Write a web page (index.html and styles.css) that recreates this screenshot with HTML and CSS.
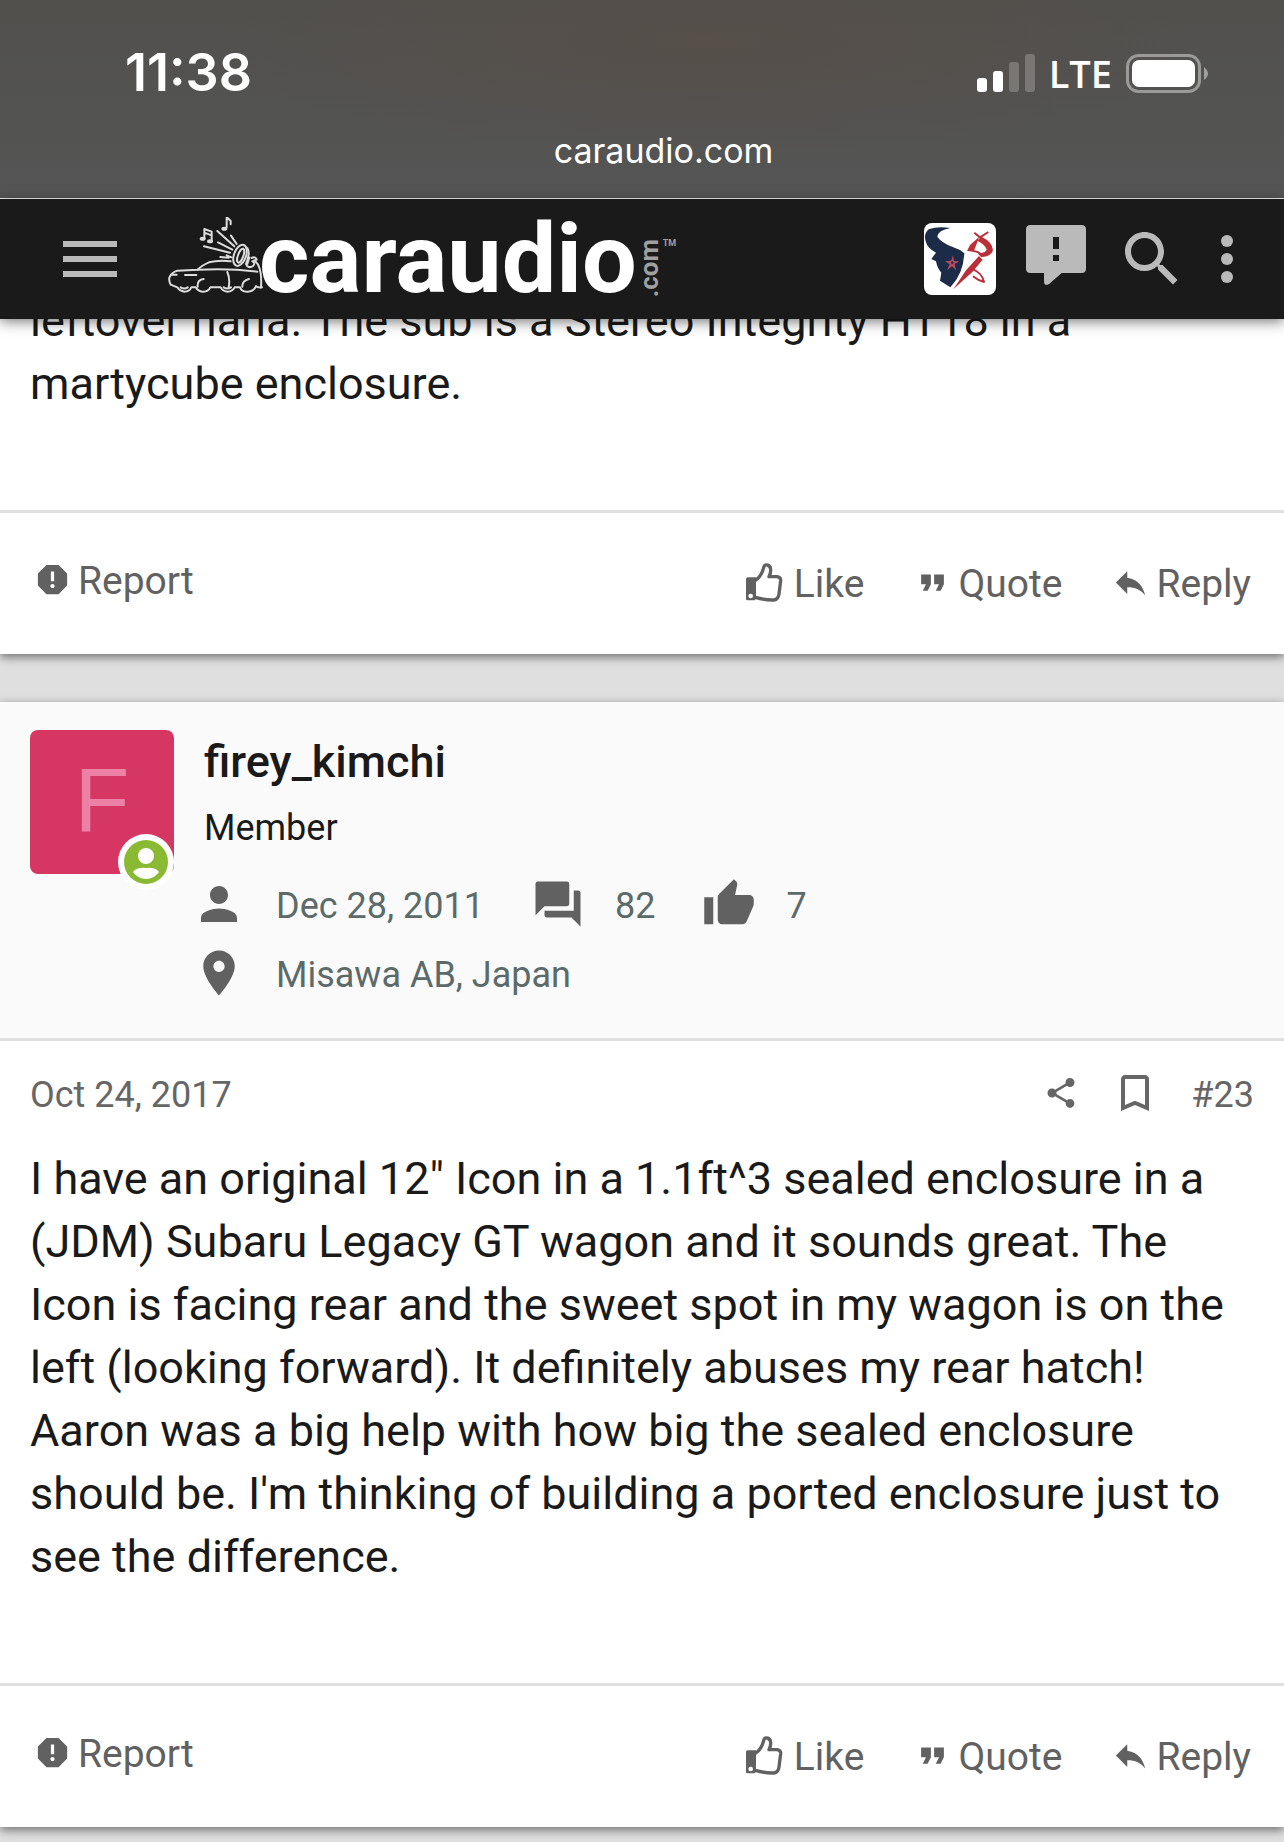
FILE: index.html
```html
<!DOCTYPE html>
<html lang="en">
<head>
<meta charset="utf-8">
<meta name="viewport" content="width=device-width, initial-scale=1">
<title>caraudio.com</title>
<link rel="stylesheet" href="styles.css">
</head>
<body>
<svg class="sprite" aria-hidden="true">
  <symbol id="report" viewBox="0 0 24 24"><path d="M15.73 3H8.27L3 8.27v7.46L8.27 21h7.46L21 15.73V8.27L15.73 3zM12 17.3c-.72 0-1.3-.58-1.3-1.3s.58-1.3 1.3-1.3 1.3.58 1.3 1.3-.58 1.3-1.3 1.3zm1-4.3h-2V7h2v6z"/></symbol>
  <symbol id="like" viewBox="48 39 126 117"><path fill-rule="evenodd" d="M53 82h25v64l-4 5H53q-5 0-5-5V87q0-5 5-5zm9 49a7 7 0 1 0 0 14a7 7 0 1 0 0-14z"/><path fill="none" stroke="currentColor" stroke-width="10" stroke-linejoin="round" d="M76 91C90 83 98 66 102 50Q104 43 112 45Q121 47 122 58Q123 69 117 80L142 80Q153 82 152 92L147 132Q145 148 132 150Q108 151 76 142"/></symbol>
  <symbol id="quote" viewBox="0 0 24 24"><path d="M6 17h3l2-4V7H5v6h3zm8 0h3l2-4V7h-6v6h3z"/></symbol>
  <symbol id="reply" viewBox="0 0 24 24"><path d="M10 9V5l-7 7 7 7v-4.1c5 0 8.500 1.600 11 5.100-1-5-4-10-11-11z"/></symbol>
</svg>

<div class="status">
  <div class="status-row">
    <span class="time">11:38</span>
    <span class="signals">
      <svg width="58" height="38" viewBox="0 0 58 38" aria-hidden="true"><g fill="#fff"><rect x="0" y="24" width="10" height="14" rx="3"/><rect x="16" y="17" width="10" height="21" rx="3"/><g opacity=".22"><rect x="32" y="8" width="10" height="30" rx="3"/><rect x="48" y="0" width="10" height="38" rx="3"/></g></g></svg>
      <span class="network">LTE</span>
      <svg width="82" height="39" viewBox="0 0 82 39" aria-hidden="true"><rect x="1.500" y="1.500" width="72" height="36" rx="11" fill="none" stroke="#fff" stroke-opacity=".42" stroke-width="3"/><rect x="6" y="6" width="63" height="27" rx="7" fill="#fff"/><path d="M78 13q8 6.500 0 13z" fill="#fff" opacity=".45"/></svg>
    </span>
  </div>
  <div class="address">caraudio.com</div>
</div>

<header class="topbar">
  <button class="bar-button" aria-label="Menu"><svg viewBox="0 0 24 24"><path d="M3 18h18v-2H3v2zm0-5h18v-2H3v2zm0-7v2h18V6H3z"/></svg></button>
  <a class="logo" href="#" aria-label="caraudio.com">
    <svg class="logo-car" viewBox="54 51 285 252" aria-hidden="true">
      <g fill="none" stroke="#dcdcdc" stroke-width="6" stroke-linejoin="round" stroke-linecap="round">
        <path d="M336 262Q322 264 318 258Q312 274 293 275Q274 276 270 262H254Q248 274 232 275Q217 273 212 262H181Q174 276 158 275Q144 274 137 262H124Q118 275 103 275Q88 273 82 262L62 254Q56 243 58 233Q64 218 82 212L143 209Q155 196 177 187Q208 179 242 184"/>
        <path d="M143 209Q240 204 322 215M232 216Q241 237 236 262M316 184Q337 202 333 262M143 260Q141 239 161 237M277 260Q276 242 297 237M92 262Q103 269 113 262M221 262Q232 269 243 262M63 224h17M105 225h34"/>
        <ellipse cx="270" cy="166" rx="18" ry="33" transform="rotate(20 270 166)"/><ellipse cx="272" cy="167" rx="8" ry="22" transform="rotate(20 272 167)"/>
        <path d="M292 144Q302 159 288 192M305 174q11-6 15 5q-7 3-13 5q10 4 3 13q-11 9-20 0M298 172l-6 20"/>
        <path d="M162 139L240 158M204 127L247 149M202 93L253 139M243 107L260 132M211 171L236 173M230 166l14 6"/>
        <path d="M163 115V87l22 8v28M163 98l22 8M230 82V51l12 12v10"/>
      </g>
      <g fill="#dcdcdc"><ellipse cx="158" cy="116" rx="9" ry="6"/><ellipse cx="180" cy="124" rx="9" ry="6"/><ellipse cx="223" cy="86" rx="9" ry="6"/></g>
    </svg>
    <span class="wordmark">caraudio</span>
    <span class="tld">.com</span>
    <span class="tm">TM</span>
  </a>
  <nav class="bar-actions" aria-label="Account">
    <button class="bar-button profile" aria-label="Profile"><svg viewBox="72 69 216 216">
      <path fill="#1c2c48" d="M151 84Q112 78 86 88Q70 102 77 124Q82 145 108 158L94 177L108 184Q112 205 124 218L120 242L151 262Q190 222 193 160Q180 148 160 142Q124 128 112 110Q114 91 151 84z"/>
      <path fill="#b54b5c" d="M159 166l3 17 16 1-14 8 4 19-12-12-15 12 8-18-14-9 18-2z"/><path fill="#1c2c48" d="M154 185l4-1 3 5-4 4-4-3z"/>
      <path fill="none" stroke="#ba3038" stroke-width="6" stroke-linejoin="round" d="M223 98L250 121M240 112L265 96M204 150Q240 154 248 168M213 206Q247 218 252 246Q235 242 219 229"/>
      <path fill="#ba3038" d="M244 110Q278 126 279 151Q272 171 243 171L234 161Q260 158 260 148Q255 134 232 122zM238 110L222 152L201 153L210 135zM237 168L248 179L217 216L160 268L198 211z"/>
    </svg></button>
    <button class="bar-button" aria-label="Alerts"><svg viewBox="0 0 24 24"><path fill-rule="evenodd" d="M3.500.700h17q1.500 0 1.500 1.500v13q0 1.500-1.500 1.500h-6.600l-4.200 3.600q-1.700.9-1.700-1v-2.600h-4.500q-1.500 0-1.500-1.500v-13q0-1.500 1.500-1.500zm7.500 4v4h2v-4zm0 6v2h2v-2z"/></svg></button>
    <button class="bar-button" aria-label="Search"><svg viewBox="0 0 24 24"><path d="M15.500 14h-.79l-.28-.27C15.410 12.590 16 11.110 16 9.500 16 5.910 13.090 3 9.500 3S3 5.910 3 9.500 5.910 16 9.500 16c1.610 0 3.090-.59 4.230-1.570l.27.28v.79l5 4.990L20.490 19l-4.990-5zm-6 0C7.010 14 5 11.990 5 9.500S7.010 5 9.500 5 14 7.010 14 9.500 11.990 14 9.500 14z"/></svg></button>
    <button class="bar-button more" aria-label="More options"><svg viewBox="0 0 24 24"><circle cx="12" cy="6" r="2"/><circle cx="12" cy="12" r="2"/><circle cx="12" cy="18" r="2"/></svg></button>
  </nav>
</header>

<main>
  <article class="post post-scrolled">
    <p class="message">leftover hana. The sub is a Stereo Integrity HT18 in a martycube enclosure.</p>
    <footer class="post-actions">
      <a class="action report" href="#"><svg class="action-icon"><use href="#report"/></svg>Report</a>
      <div class="responses">
        <a class="action" href="#"><svg class="action-icon thumb"><use href="#like"/></svg>Like</a>
        <a class="action" href="#"><svg class="action-icon"><use href="#quote"/></svg>Quote</a>
        <a class="action" href="#"><svg class="action-icon"><use href="#reply"/></svg>Reply</a>
      </div>
    </footer>
  </article>

  <article class="post">
    <header class="author">
      <a class="avatar" href="#" aria-label="firey_kimchi">F
        <svg class="online" viewBox="0 0 56 56" aria-hidden="true"><circle cx="28" cy="28" r="28" fill="#fff"/><circle cx="28" cy="28" r="22" fill="#8ab933"/><circle cx="28" cy="22" r="8" fill="#fff"/><path fill="#fff" d="M15 38Q19 33 28 34Q37 33 41 38Q36 45 28 45Q20 45 15 38z"/></svg>
      </a>
      <div class="author-info">
        <h2 class="name"><a href="#">firey_kimchi</a></h2>
        <div class="rank">Member</div>
        <div class="stats">
          <span class="stat"><svg viewBox="0 0 24 24"><path d="M12 12c2.210 0 4-1.790 4-4s-1.790-4-4-4-4 1.790-4 4 1.790 4 4 4zm0 2c-2.670 0-8 1.340-8 4v2h16v-2c0-2.660-5.330-4-8-4z"/></svg>Dec 28, 2011</span>
          <span class="stat"><svg viewBox="0 0 24 24"><path d="M21 6h-2v9H6v2c0 .55.45 1 1 1h11l4 4V7c0-.55-.45-1-1-1zm-4 6V3c0-.55-.45-1-1-1H3c-.55 0-1 .45-1 1v14l4-4h10c.55 0 1-.45 1-1z"/></svg>82</span>
          <span class="stat"><svg viewBox="0 0 24 24"><path d="M1 21h4V9H1v12zm22-11c0-1.100-.9-2-2-2h-6.310l.95-4.570.03-.32c0-.41-.17-.79-.44-1.060L14.170 1 7.590 7.590C7.220 7.950 7 8.450 7 9v10c0 1.100.9 2 2 2h9c.83 0 1.540-.5 1.840-1.220l3.020-7.050c.09-.23.14-.47.14-.73v-2z"/></svg>7</span>
        </div>
        <div class="stats">
          <span class="stat"><svg viewBox="0 0 24 24"><path d="M12 2C8.130 2 5 5.130 5 9c0 5.250 7 13 7 13s7-7.750 7-13c0-3.870-3.130-7-7-7zm0 9.500c-1.380 0-2.500-1.120-2.500-2.500s1.120-2.500 2.500-2.500 2.500 1.120 2.500 2.500-1.120 2.500-2.500 2.500z"/></svg>Misawa AB, Japan</span>
        </div>
      </div>
    </header>
    <div class="post-meta">
      <time datetime="2017-10-24">Oct 24, 2017</time>
      <div class="post-tools">
        <button class="tool" aria-label="Share"><svg class="share" viewBox="0 0 24 24"><path d="M18 16.080c-.76 0-1.440.3-1.960.77L8.910 12.700c.05-.23.09-.46.09-.7s-.04-.47-.09-.7l7.050-4.110c.54.5 1.250.81 2.040.81 1.660 0 3-1.340 3-3s-1.340-3-3-3-3 1.340-3 3c0 .24.04.47.09.7L8.040 9.810C7.500 9.310 6.790 9 6 9c-1.660 0-3 1.340-3 3s1.340 3 3 3c.79 0 1.500-.31 2.040-.81l7.120 4.160c-.05.21-.08.43-.08.65 0 1.610 1.310 2.920 2.920 2.920s2.920-1.310 2.920-2.920-1.310-2.920-2.920-2.920z"/></svg></button>
        <button class="tool" aria-label="Bookmark"><svg class="bookmark" viewBox="0 0 24 24"><path d="M17 3H7c-1.100 0-1.990.9-1.990 2L5 21l7-3 7 3V5c0-1.100-.9-2-2-2zm0 15l-5-2.180L7 18V5h10v13z"/></svg></button>
        <a href="#">#23</a>
      </div>
    </div>
    <p class="message">I have an original 12" Icon in a 1.1ft^3 sealed enclosure in a (JDM) Subaru Legacy GT wagon and it sounds great. The Icon is facing rear and the sweet spot in my wagon is on the left (looking forward). It definitely abuses my rear hatch! Aaron was a big help with how big the sealed enclosure should be. I'm thinking of building a ported enclosure just to see the difference.</p>
    <footer class="post-actions">
      <a class="action report" href="#"><svg class="action-icon"><use href="#report"/></svg>Report</a>
      <div class="responses">
        <a class="action" href="#"><svg class="action-icon thumb"><use href="#like"/></svg>Like</a>
        <a class="action" href="#"><svg class="action-icon"><use href="#quote"/></svg>Quote</a>
        <a class="action" href="#"><svg class="action-icon"><use href="#reply"/></svg>Reply</a>
      </div>
    </footer>
  </article>
</main>
</body>
</html>
```
FILE: styles.css
```css
* { box-sizing: border-box; }

body {
  margin: 0;
  min-height: 100vh;
  background: #dfdfdf;
  color: #1a1a1a;
  font-family: Roboto, "Liberation Sans", sans-serif;
  font-size: 36px;
}

a { color: inherit; text-decoration: none; }
button { padding: 0; border: 0; background: none; color: inherit; font: inherit; }
svg { display: block; flex: none; fill: currentColor; }
.sprite { position: absolute; width: 0; height: 0; }

/* Phone status area */
.status {
  padding: 44px 76px 26px 125px;
  border-bottom: 1px solid #f4f4f4;
  background:
    radial-gradient(ellipse at 55% 20%, #564f4a 0, #564f4a00 50%),
    linear-gradient(#51504d, #555555);
  color: #fff;
  font-family: Inter, "Liberation Sans", sans-serif;
}
.status-row { display: flex; align-items: center; justify-content: space-between; line-height: 58px; }
.time { font-size: 52px; font-weight: 600; }
.signals { display: flex; align-items: center; gap: 14px; }
.network { font-family: "Open Sans", "Noto Sans", sans-serif; font-size: 38px; font-weight: 600; }
.address { margin-top: 28px; padding-right: 6px; font-size: 34px; line-height: 42px; text-align: center; }

/* Site bar */
.topbar {
  position: relative;
  z-index: 1;
  display: flex;
  align-items: center;
  padding: 18px 21px 18px 54px;
  background: #1a1a1a;
  color: #bababa;
  box-shadow: 0 3px 12px rgba(0, 0, 0, .5);
}
.bar-button { width: 72px; height: 72px; }
.bar-button svg { width: 72px; height: 72px; }
.logo { display: flex; margin-left: 42px; height: 84px; }
.logo-car { width: 95px; height: 84px; margin-right: -4px; }
.wordmark { margin-right: -2px; color: #fff; font-size: 97px; font-weight: 700; line-height: 84px; }
.tld {
  align-self: flex-end;
  color: #a0a0a0;
  font-size: 26px;
  font-weight: 700;
  line-height: 28px;
  padding-top: 4px;
  writing-mode: vertical-rl;
  transform: rotate(180deg);
}
.tm { padding-top: 20px; color: #a0a0a0; font-size: 9px; font-weight: 700; line-height: 12px; }
.bar-actions { display: flex; gap: 24px; margin-left: auto; }
.profile { overflow: hidden; border-radius: 8px; background: #fff; }
.more { margin-left: -21px; }

/* Posts */
.post { background: #fff; box-shadow: 0 3px 9px rgba(0, 0, 0, .5); }
.post + .post { margin-top: 48px; }
.post-scrolled { margin-top: -30px; }
.message { margin: 0; padding: 0 30px 95px; font-size: 45px; line-height: 63px; }

.post-actions {
  display: flex;
  align-items: flex-start;
  justify-content: space-between;
  padding: 46px 33px 47px;
  border-top: 3px solid #e0e0e0;
  color: #616161;
  font-size: 39px;
  line-height: 45px;
}
.responses { display: flex; gap: 49px; padding-top: 3px; }
.action { display: flex; align-items: center; gap: 6px; }
.action-icon { width: 39px; height: 39px; margin-bottom: 4px; }
.thumb { width: 42px; }

.author {
  display: flex;
  gap: 30px;
  padding: 28px 30px 38px;
  border-bottom: 3px solid #e0e0e0;
  background: #fafafa;
}
.avatar {
  position: relative;
  flex: none;
  width: 144px;
  height: 144px;
  border-radius: 8px;
  background: #d53762;
  color: #ec80a5;
  font-family: "Liberation Sans", sans-serif;
  font-size: 90px;
  line-height: 140px;
  text-align: center;
}
.online { position: absolute; right: 0; bottom: -16px; width: 56px; height: 56px; }
.author-info { padding-top: 5px; }
.name { margin: 0; font-size: 45px; font-weight: 500; line-height: 54px; }
.rank { margin: 18px 0 28px; line-height: 42px; }
.stats { display: flex; gap: 47px; margin-left: -12px; color: #5c6b69; line-height: 50px; }
.stats + .stats { margin-top: 15px; }
.stat { display: flex; align-items: flex-end; gap: 30px; }
.stat svg { width: 54px; height: 54px; color: #616161; }

.post-meta {
  display: flex;
  align-items: flex-end;
  justify-content: space-between;
  padding: 28px 30px 30px;
  color: #666;
  line-height: 44px;
}
.post-tools { display: flex; align-items: flex-end; gap: 32px; }
.tool { display: flex; align-items: center; height: 48px; }
.share { width: 36px; height: 36px; }
.bookmark { width: 48px; height: 48px; }
```
